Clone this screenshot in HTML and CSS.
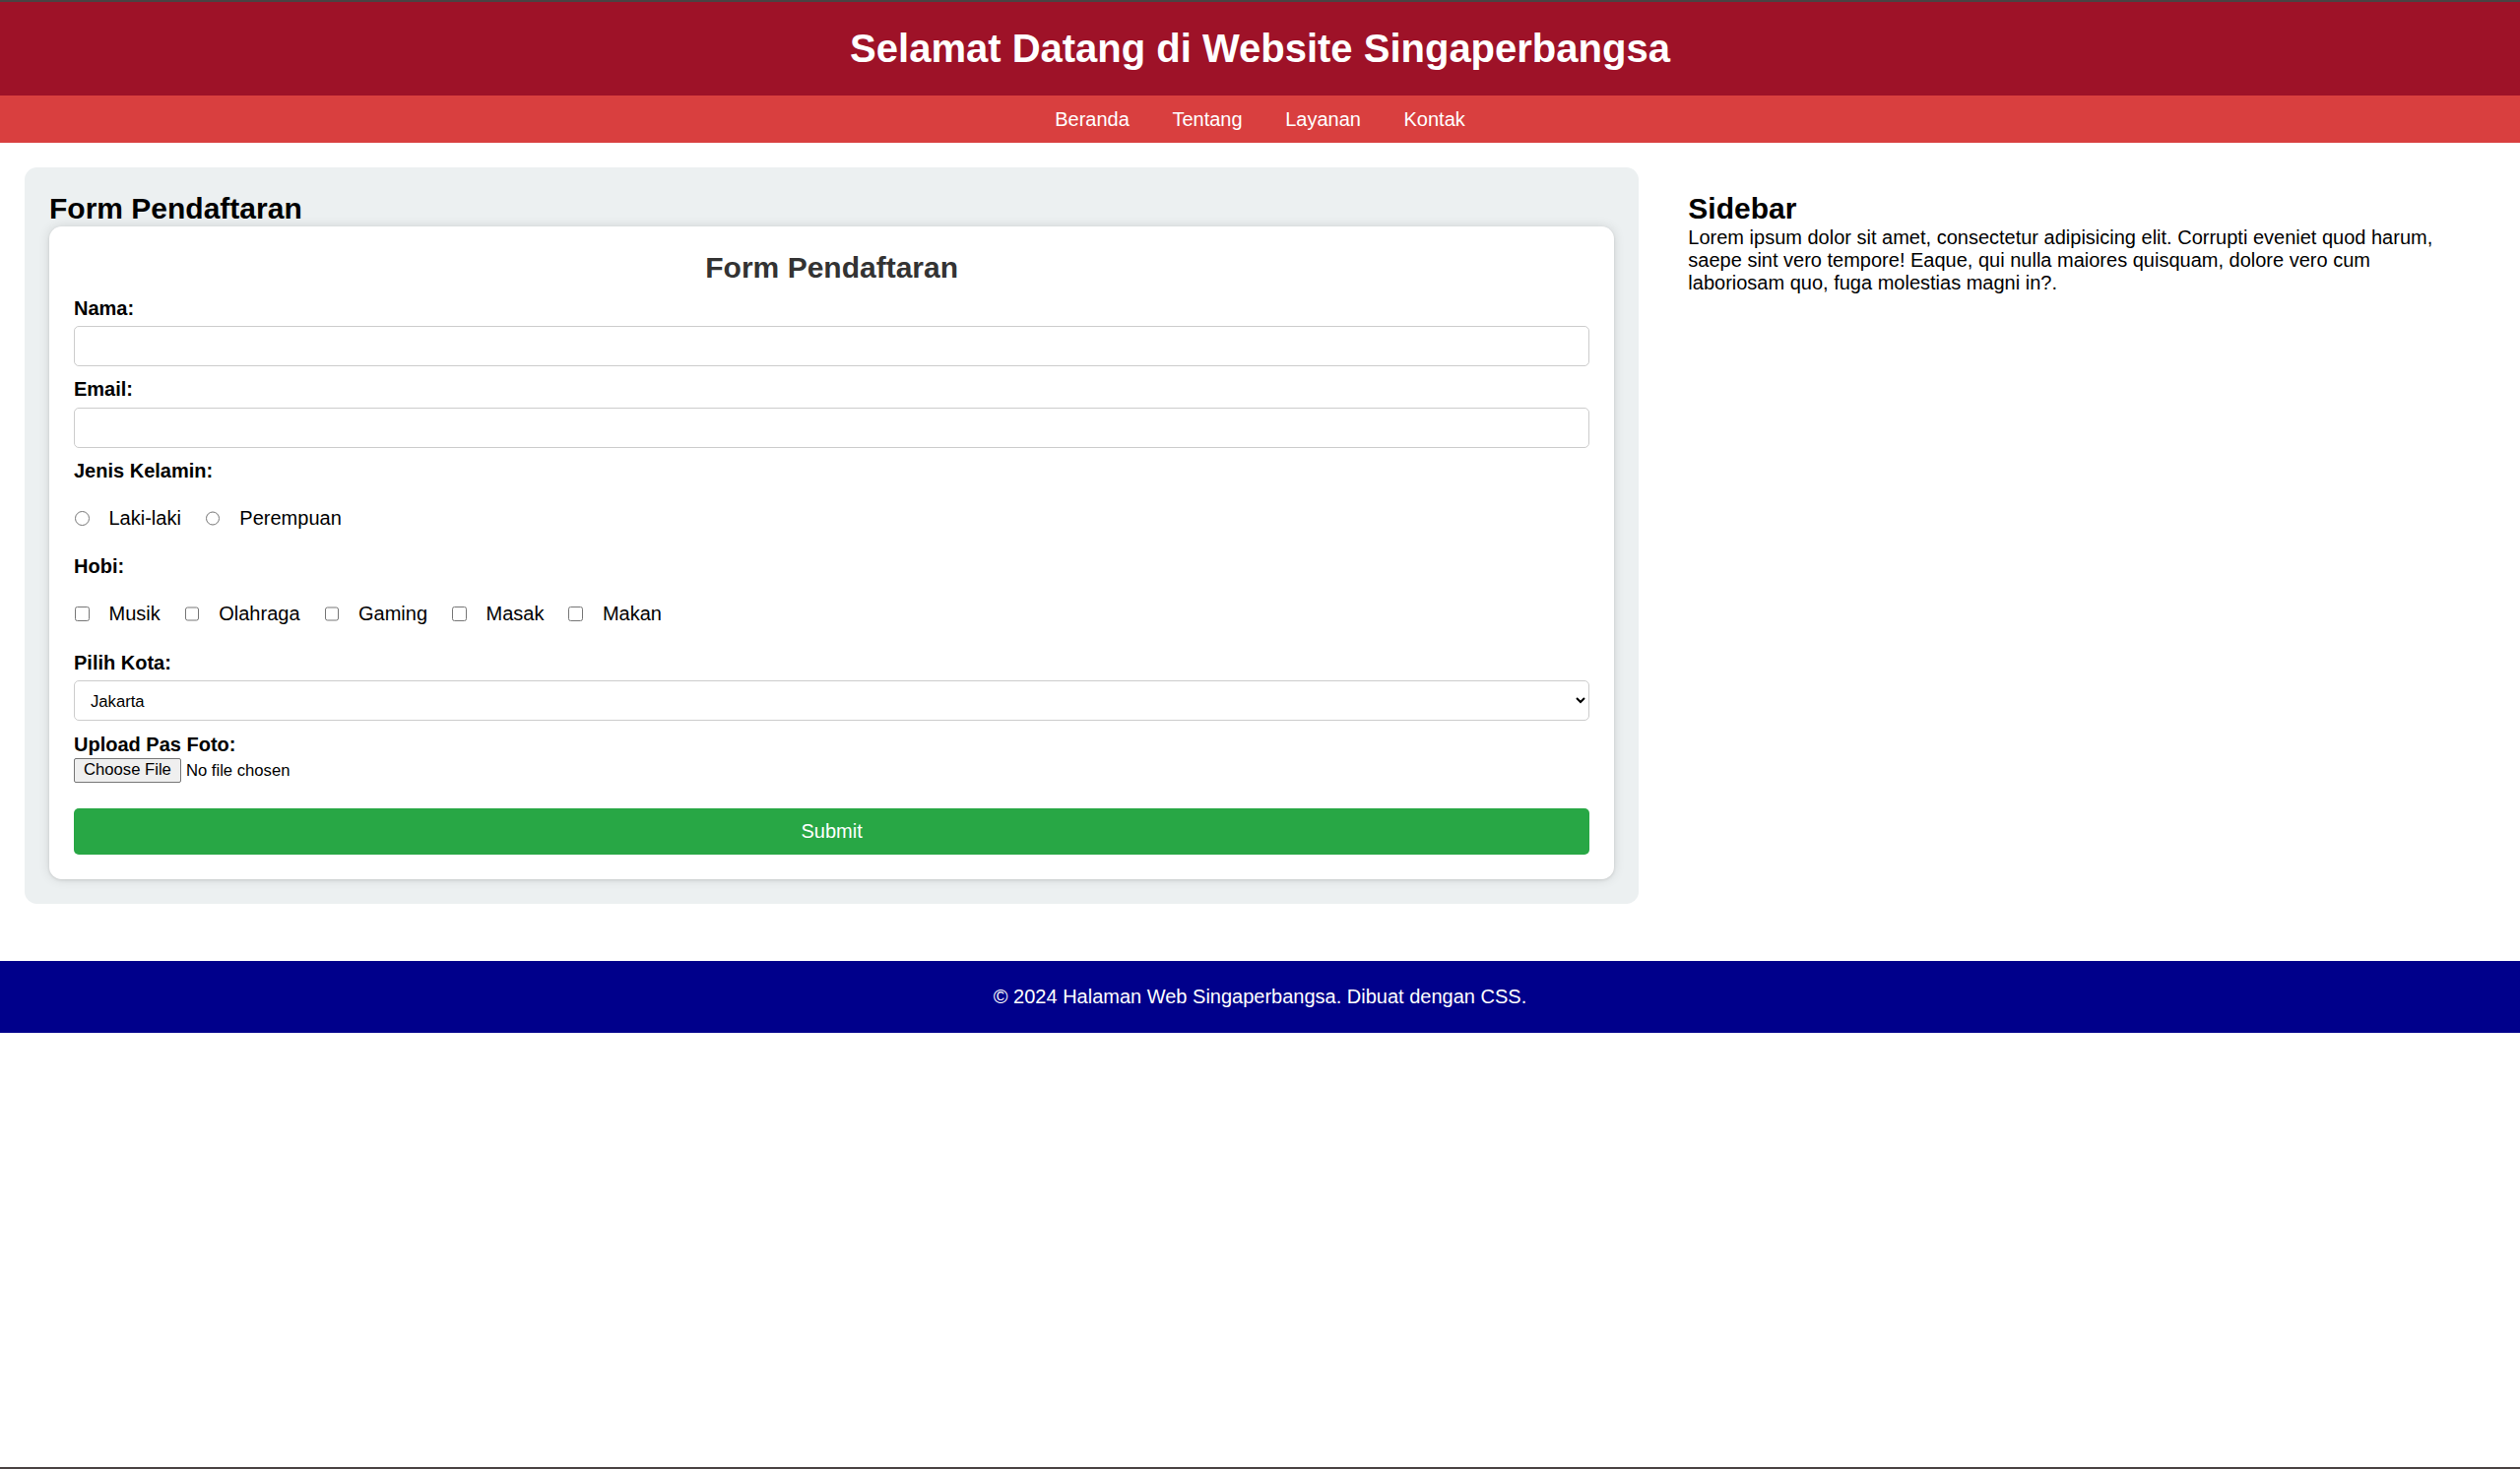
FILE: index.html
```html
<!DOCTYPE html>
<html lang="id">
<head>
<meta charset="utf-8">
<title>Halaman Web Singaperbangsa</title>
<link rel="stylesheet" href="styles.css">
</head>
<body>
<header class="site-header">
  <h1 class="site-title">Selamat Datang di Website Singaperbangsa</h1>
</header>
<nav class="site-nav">
  <a href="#" class="nav-link">Beranda</a>
  <a href="#" class="nav-link">Tentang</a>
  <a href="#" class="nav-link">Layanan</a>
  <a href="#" class="nav-link">Kontak</a>
</nav>
<main class="main">
  <section class="form-section">
    <h2 class="section-title">Form Pendaftaran</h2>
    <form class="form-card">
      <h2 class="card-title">Form Pendaftaran</h2>
      <label class="field-label" for="nama">Nama:</label>
      <input class="text-input" type="text" id="nama">
      <label class="field-label" for="email">Email:</label>
      <input class="text-input" type="email" id="email">
      <span class="field-label">Jenis Kelamin:</span>
      <div class="options">
        <label class="option"><input class="radio" type="radio" name="jk"><span>Laki-laki</span></label>
        <label class="option"><input class="radio" type="radio" name="jk"><span>Perempuan</span></label>
      </div>
      <span class="field-label">Hobi:</span>
      <div class="options">
        <label class="option"><input class="check" type="checkbox"><span>Musik</span></label>
        <label class="option"><input class="check" type="checkbox"><span>Olahraga</span></label>
        <label class="option"><input class="check" type="checkbox"><span>Gaming</span></label>
        <label class="option"><input class="check" type="checkbox"><span>Masak</span></label>
        <label class="option"><input class="check" type="checkbox"><span>Makan</span></label>
      </div>
      <label class="field-label" for="kota">Pilih Kota:</label>
      <select class="select-input" id="kota">
        <option>Jakarta</option>
        <option>Bandung</option>
        <option>Karawang</option>
      </select>
      <label class="field-label upload-label" for="foto">Upload Pas Foto:</label>
      <input class="file-input" type="file" id="foto">
      <button class="submit-btn" type="button">Submit</button>
    </form>
  </section>
  <aside class="sidebar">
    <h2 class="section-title">Sidebar</h2>
    <p class="sidebar-text">Lorem ipsum dolor sit amet, consectetur adipisicing elit. Corrupti eveniet quod harum, saepe sint vero tempore! Eaque, qui nulla maiores quisquam, dolore vero cum laboriosam quo, fuga molestias magni in?.</p>
  </aside>
</main>
<footer class="site-footer">
  <p class="footer-text">&copy; 2024 Halaman Web Singaperbangsa. Dibuat dengan CSS.</p>
</footer>
</body>
</html>
```

FILE: styles.css
```css
* {
  box-sizing: border-box;
}

html, body {
  margin: 0;
  padding: 0;
  background: #ffffff;
}

body {
  font-family: "Liberation Sans", Arial, sans-serif;
  font-size: 20px;
  color: #000;
  min-height: 1492px;
  border-bottom: 2px solid #4a4343;
  display: flex;
  flex-direction: column;
}

.site-header {
  background: #9e1228;
  border-top: 2px solid #4a4343;
  padding: 24px 0 25px;
  text-align: center;
}

.site-title {
  margin: 0;
  color: #fff;
  font-size: 40px;
  line-height: 46px;
  font-weight: bold;
}

.site-nav {
  background: #d93f3f;
  display: flex;
  justify-content: center;
  gap: 43.6px;
  padding: 13px 0 12px;
}

.nav-link {
  color: #fff;
  text-decoration: none;
  font-size: 20px;
  line-height: 23px;
}

.main {
  display: flex;
  gap: 25px;
  padding: 25px;
  align-items: flex-start;
}

.form-section {
  flex: 2 1 0;
  min-width: 0;
  background: #ecf0f1;
  border-radius: 12.5px;
  padding: 25px;
}

.section-title {
  margin: 0;
  font-size: 30px;
  line-height: 34.5px;
  font-weight: bold;
  color: #000;
}

.form-card {
  display: flex;
  flex-direction: column;
  align-items: stretch;
  background: #fff;
  border-radius: 12.5px;
  padding: 25px;
  box-shadow: 0 0 12px rgba(0, 0, 0, 0.12), 0 1px 3px rgba(0, 0, 0, 0.1);
}

.card-title {
  margin: 0 0 12.5px;
  text-align: center;
  color: #333;
  font-size: 30px;
  line-height: 34.5px;
  font-weight: bold;
}

.field-label {
  display: block;
  font-weight: bold;
  font-size: 20px;
  line-height: 23px;
  margin-bottom: 6.25px;
}

.upload-label {
  margin-bottom: 1.5px;
}

.text-input,
.select-input {
  width: 100%;
  height: 41px;
  padding: 10px;
  border: 1px solid #ccc;
  border-radius: 5px;
  font-family: "Liberation Sans", Arial, sans-serif;
  font-size: 16.67px;
  margin: 0 0 12.5px;
  background: #fff;
  color: #000;
}

.select-input {
  height: 41.5px;
  padding: 10px 8px 10px 12px;
  margin-bottom: 13px;
}

.options {
  display: flex;
  align-items: center;
  gap: 25px;
  margin: 18.5px 0 26.5px;
  padding-left: 1px;
  line-height: 23px;
}

.option {
  display: flex;
  align-items: center;
  gap: 20px;
  font-size: 20px;
  color: #000;
}

.radio,
.check {
  width: 14.5px;
  height: 14.5px;
  margin: 0;
}

.file-input {
  font-family: "Liberation Sans", Arial, sans-serif;
  font-size: 16.67px;
  color: #000;
  height: 25px;
  margin: 0 0 26px;
}

.file-input::file-selector-button {
  font-family: "Liberation Sans", Arial, sans-serif;
  font-size: 16.67px;
  height: 25px;
  padding: 0 9px;
  margin-right: 5px;
  border: 1px solid #767676;
  border-radius: 2px;
  background: #efefef;
  color: #000;
}

.submit-btn {
  width: 100%;
  border: none;
  border-radius: 5px;
  background: #28a745;
  color: #fff;
  font-family: "Liberation Sans", Arial, sans-serif;
  font-size: 20px;
  line-height: 23px;
  padding: 12px;
}

.sidebar {
  flex: 1 1 0;
  min-width: 0;
  padding: 25px;
}

.sidebar-text {
  margin: 0;
  font-size: 20px;
  line-height: 23px;
}

.site-footer {
  background: #00008b;
  color: #fff;
  text-align: center;
  padding: 25px;
  margin-top: 33px;
}

.footer-text {
  margin: 0;
  font-size: 20px;
  line-height: 23px;
}
```
